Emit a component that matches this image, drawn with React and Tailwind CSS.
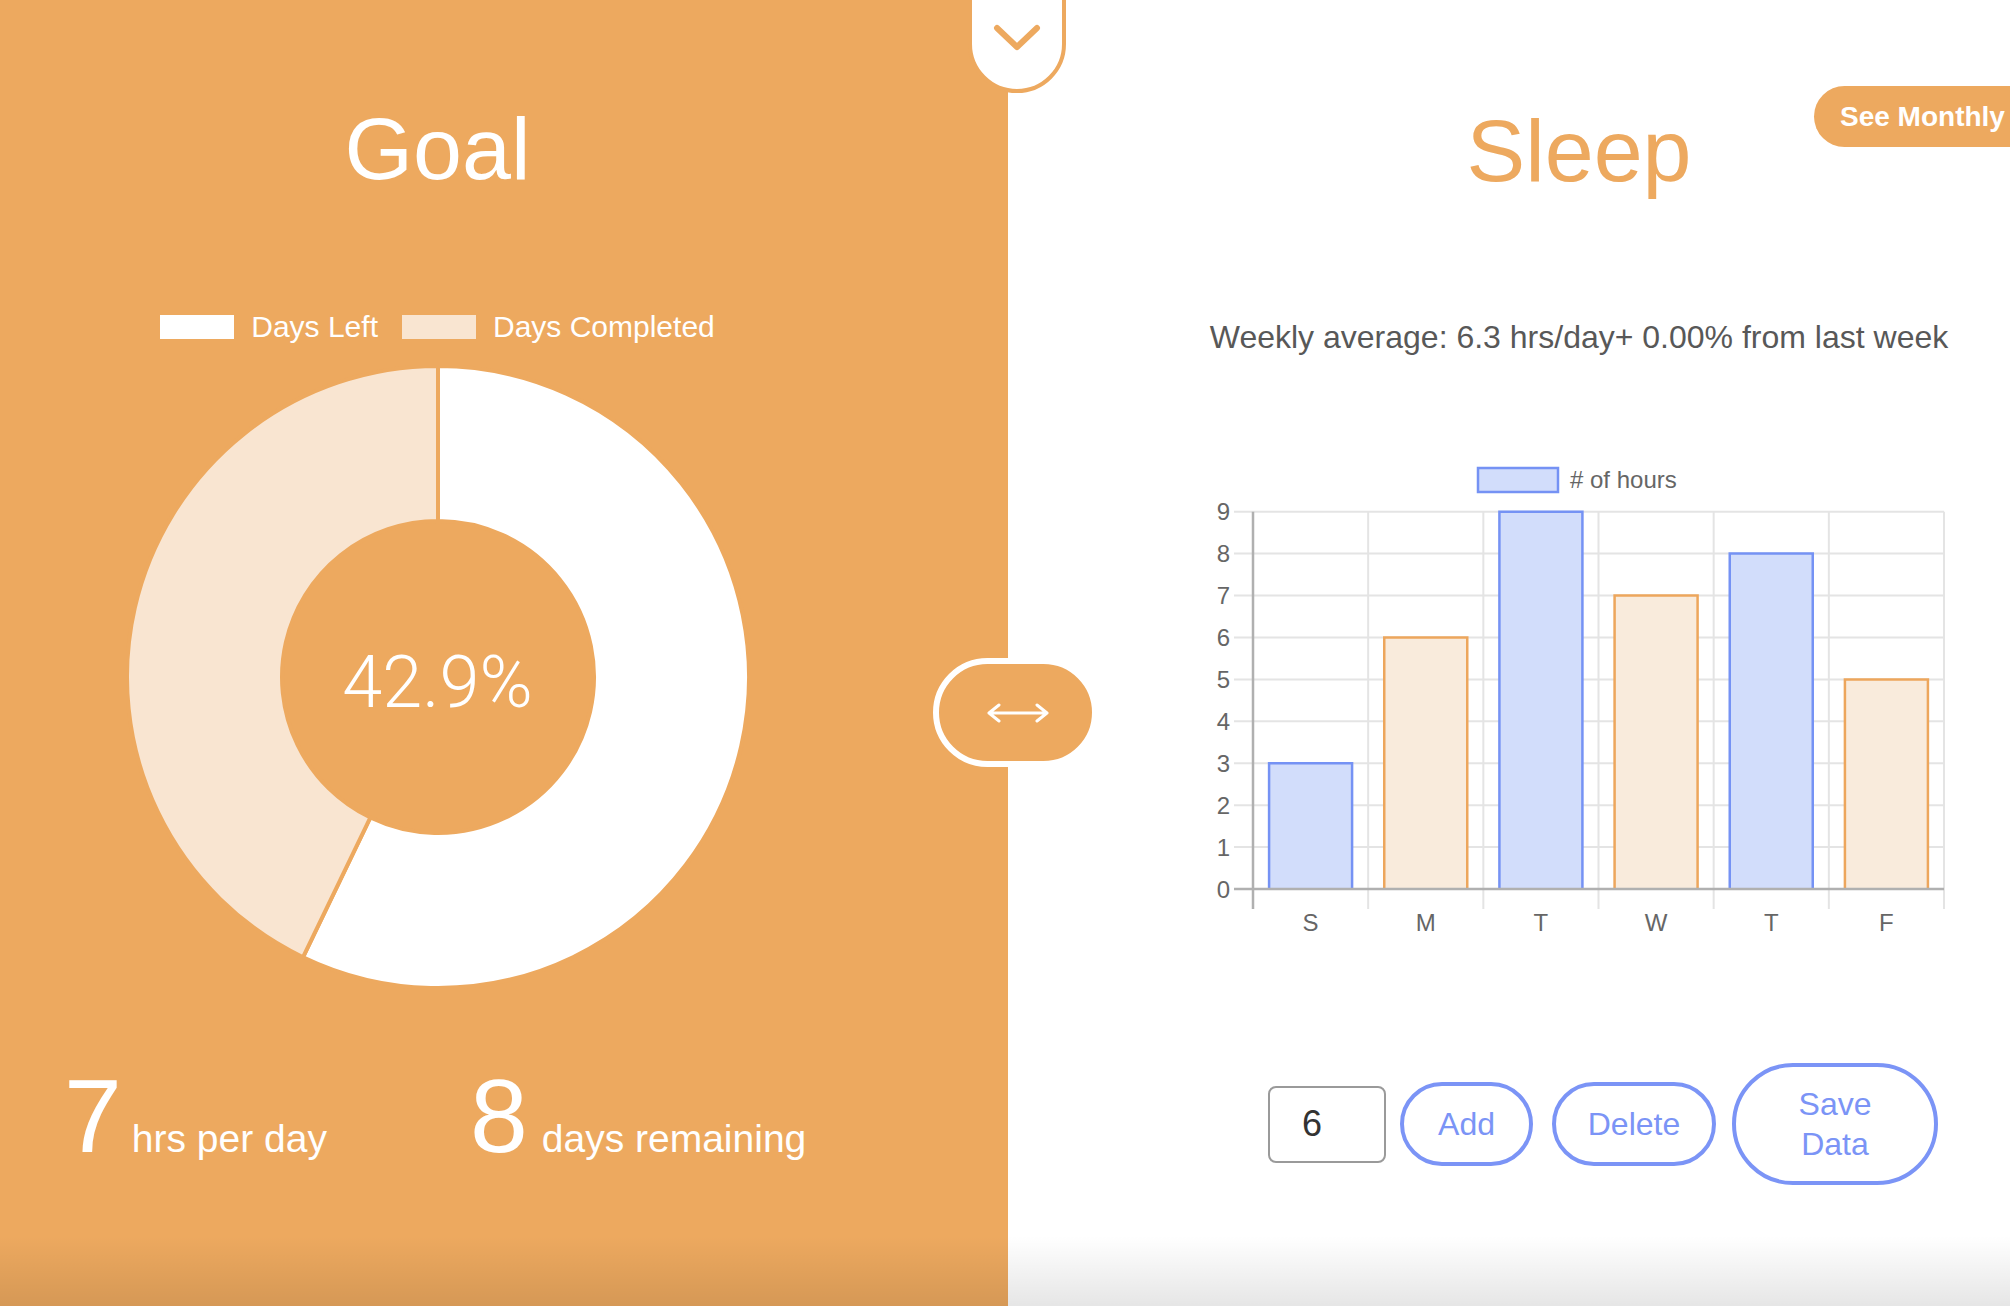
import React from 'react';

const ORANGE = '#eda95f';

const week = [
  { label: 'S', hours: 3, tone: 'blue' },
  { label: 'M', hours: 6, tone: 'orange' },
  { label: 'T', hours: 9, tone: 'blue' },
  { label: 'W', hours: 7, tone: 'orange' },
  { label: 'T', hours: 8, tone: 'blue' },
  { label: 'F', hours: 5, tone: 'orange' },
];

const barTones = {
  blue: { fill: '#d2ddfb', stroke: '#7592f4' },
  orange: { fill: '#f9ebdc', stroke: '#eda65c' },
};

// angles in degrees, measured clockwise from 12 o'clock
const pt = (cx, cy, rad, deg) => {
  const a = (deg * Math.PI) / 180;
  return [cx + rad * Math.sin(a), cy - rad * Math.cos(a)];
};

const ringSlice = (cx, cy, R, r, a0, a1) => {
  const large = a1 - a0 > 180 ? 1 : 0;
  const [ox0, oy0] = pt(cx, cy, R, a0);
  const [ox1, oy1] = pt(cx, cy, R, a1);
  const [ix1, iy1] = pt(cx, cy, r, a1);
  const [ix0, iy0] = pt(cx, cy, r, a0);
  return `M${ox0} ${oy0} A${R} ${R} 0 ${large} 1 ${ox1} ${oy1} L${ix1} ${iy1} A${r} ${r} 0 ${large} 0 ${ix0} ${iy0} Z`;
};

const GoalDonut = ({ done, total }) => {
  const pct = (done / total) * 100;
  const split = 360 * (1 - done / total);
  return (
    <div className="relative mt-[23px] h-[624px] w-[624px]">
      <svg width="624" height="624" viewBox="0 0 624 624">
        <path d={ringSlice(312, 312, 311, 156, 0, split)} fill="#ffffff" stroke={ORANGE} strokeWidth="4" />
        <path d={ringSlice(312, 312, 311, 156, split, 360)} fill="#f9e5d1" stroke={ORANGE} strokeWidth="4" />
      </svg>
      <div className="absolute inset-0 flex items-center justify-center pt-[11px]">
        <span className="font-['Roboto',sans-serif] text-[72px] font-light leading-none text-white">
          {pct.toFixed(1)}%
        </span>
      </div>
    </div>
  );
};

const SleepChart = () => {
  const x0 = 73;
  const x1 = 764;
  const yZero = 434;
  const unit = (434 - 56.7) / 9;
  const catW = (x1 - x0) / 6;
  const yTop = yZero - 9 * unit;

  return (
    <svg width="780" height="490" viewBox="0 0 780 490" className="ml-[32px] mt-[102px] shrink-0">
      {/* legend */}
      <rect x="298" y="13" width="80" height="24" fill={barTones.blue.fill} stroke={barTones.blue.stroke} strokeWidth="2.5" />
      <text x="390" y="33" fontSize="24" fill="#666">
        # of hours
      </text>

      {/* grid */}
      {Array.from({ length: 9 }, (_, i) => i + 1).map((k) => (
        <line key={`h${k}`} x1="54" x2={x1} y1={yZero - k * unit} y2={yZero - k * unit} stroke="#e4e4e4" strokeWidth="2" />
      ))}
      {Array.from({ length: 6 }, (_, i) => i + 1).map((i) => (
        <line key={`v${i}`} x1={x0 + i * catW} x2={x0 + i * catW} y1={yTop} y2={yZero + 20} stroke="#e4e4e4" strokeWidth="2" />
      ))}

      {/* bars */}
      {week.map((d, i) => {
        const c = x0 + (i + 0.5) * catW;
        const left = c - 41.5;
        const top = yZero - d.hours * unit;
        const tone = barTones[d.tone];
        return (
          <g key={i}>
            <rect x={left} y={top} width="83" height={d.hours * unit} fill={tone.fill} />
            <path d={`M${left} ${yZero} V${top} H${left + 83} V${yZero}`} fill="none" stroke={tone.stroke} strokeWidth="2.5" />
          </g>
        );
      })}

      {/* axes */}
      <line x1="54" x2={x1} y1={yZero} y2={yZero} stroke="#b0b0b0" strokeWidth="2.5" />
      <line x1={x0} x2={x0} y1={yTop} y2={yZero + 20} stroke="#b0b0b0" strokeWidth="2.5" />

      {/* tick labels */}
      {Array.from({ length: 10 }, (_, k) => k).map((k) => (
        <text key={`y${k}`} x="50" y={yZero - k * unit + 8.5} fontSize="24" fill="#666" textAnchor="end">
          {k}
        </text>
      ))}
      {week.map((d, i) => (
        <text key={`x${i}`} x={x0 + (i + 0.5) * catW} y="476" fontSize="24" fill="#666" textAnchor="middle">
          {d.label}
        </text>
      ))}
    </svg>
  );
};

const OutlineButton = ({ className, children }) => (
  <button className={`flex h-[84px] items-center justify-center rounded-full border-4 border-[#7b94f6] bg-white text-[32px] leading-[40px] text-[#7b94f6] ${className}`}>
    {children}
  </button>
);

export default function App() {
  return (
    <div className="relative flex h-[1306px] w-[2010px] overflow-hidden bg-white font-['Liberation_Sans',Arial,sans-serif]">
      {/* Goal side */}
      <div className="w-[1008px] shrink-0 bg-[#eda95f]">
        <div className="flex w-[875px] flex-col items-center">
          <h1 className="mt-[105px] text-[88px] leading-none text-white">Goal</h1>

          <div className="mt-[119px] flex h-[30px] items-center text-[30px] leading-none text-white">
            <span className="h-[24px] w-[74px] bg-white" />
            <span className="ml-[17px]">Days Left</span>
            <span className="ml-[24px] h-[24px] w-[74px] bg-[#f9e5d1]" />
            <span className="ml-[17px]">Days Completed</span>
          </div>

          <GoalDonut done={3} total={7} />

          <div className="mt-[75px] flex w-full items-baseline pl-[64px] text-white">
            <span className="text-[104px] leading-none">7</span>
            <span className="ml-[10px] text-[39px] leading-none">hrs per day</span>
            <span className="ml-[143px] text-[104px] leading-none">8</span>
            <span className="ml-[14px] text-[39px] leading-none">days remaining</span>
          </div>
        </div>
      </div>

      {/* Sleep side */}
      <div className="flex-1 pl-[140px]">
        <div className="flex w-[862px] flex-col">
          <h1 className="mt-[107px] self-center text-[88px] leading-none text-[#eda95f]">Sleep</h1>
          <p className="mt-[126px] self-center text-[32px] leading-none text-[#585858]">
            Weekly average: 6.3 hrs/day+ 0.00% from last week
          </p>

          <SleepChart />

          <div className="ml-[120px] mt-[118px] flex items-center">
            <input
              readOnly
              value="6"
              className="h-[77px] w-[118px] rounded-[8px] border-2 border-[#9a9a9a] pl-[32px] text-[36px] text-[#333] outline-none"
            />
            <OutlineButton className="ml-[14px] w-[133px]">Add</OutlineButton>
            <OutlineButton className="ml-[19px] w-[164px]">Delete</OutlineButton>
            <OutlineButton className="ml-[16px] h-[122px] w-[206px] px-[52px] text-center">Save Data</OutlineButton>
          </div>
        </div>
      </div>

      {/* collapse tab */}
      <div className="absolute left-[968px] top-[-50px] flex h-[143px] w-[98px] items-end justify-center rounded-b-[49px] border-4 border-[#eda95f] bg-white pb-[36px]">
        <svg width="52" height="30" viewBox="0 0 52 30">
          <path d="M6 5 L26 24 L46 5" fill="none" stroke={ORANGE} strokeWidth="6" strokeLinecap="round" strokeLinejoin="round" />
        </svg>
      </div>

      {/* swap toggle */}
      <button className="absolute left-[933px] top-[658px] flex h-[109px] w-[165px] items-center justify-center rounded-full border-[6px] border-white bg-[#eda95f]">
        <svg width="64" height="24" viewBox="0 0 64 24" className="ml-[4px]">
          <path d="M3 12 H61 M13 4 L3 12 L13 20 M51 4 L61 12 L51 20" fill="none" stroke="#fff" strokeWidth="3" strokeLinecap="round" strokeLinejoin="round" />
        </svg>
      </button>

      {/* monthly */}
      <button className="absolute left-[1814px] top-[86px] flex h-[61px] w-[240px] items-center rounded-l-full bg-[#eda95f] pl-[26px] text-[28px] font-bold text-white">
        See Monthly
      </button>

      {/* bottom fade */}
      <div className="pointer-events-none absolute bottom-0 left-0 right-0 h-[70px] bg-linear-to-b from-transparent to-black/10" />
    </div>
  );
}
